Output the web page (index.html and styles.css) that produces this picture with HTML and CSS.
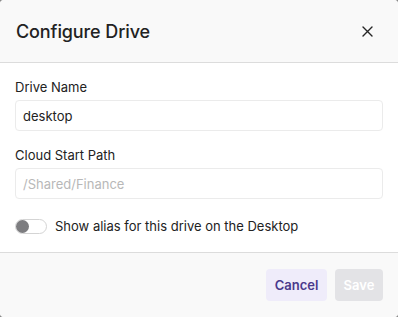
FILE: index.html
```html
<!DOCTYPE html>
<html>
<head>
<meta charset="utf-8">
<link rel="stylesheet" href="styles.css">
</head>
<body>
<div class="dialog">
  <div class="header">
    <h1 class="title">Configure Drive</h1>
    <button class="close" aria-label="Close">
      <svg width="11" height="11" viewBox="0 0 11 11"><path d="M1 1L10 10M10 1L1 10" stroke="#262626" stroke-width="1.4" stroke-linecap="round"/></svg>
    </button>
  </div>
  <div class="body">
    <label class="field">
      <span class="label">Drive Name</span>
      <input class="input" type="text" value="desktop">
    </label>
    <label class="field">
      <span class="label">Cloud Start Path</span>
      <input class="input" type="text" placeholder="/Shared/Finance">
    </label>
    <div class="toggle-row">
      <span class="switch"><span class="knob"></span></span>
      <span class="toggle-text">Show alias for this drive on the Desktop</span>
    </div>
  </div>
  <div class="footer">
    <button class="btn cancel">Cancel</button>
    <button class="btn save" disabled>Save</button>
  </div>
</div>
</body>
</html>
```

FILE: styles.css
```css
* { box-sizing: border-box; }
html, body { margin: 0; padding: 0; }
body {
  background: #8a8a8a;
  font-family: Inter, "Noto Sans", sans-serif;
  color: #222;
  width: 398px;
  height: 317px;
  overflow: hidden;
}
.dialog {
  width: 398px;
  height: 317px;
  background: #fff;
  border-radius: 4px;
  display: flex;
  flex-direction: column;
  overflow: hidden;
}
.header {
  height: 63px;
  background: #f9f9f9;
  border-bottom: 1px solid #dcdcdc;
  display: flex;
  align-items: center;
  justify-content: space-between;
  padding: 0 25px 0 16px;
  flex: none;
}
.title {
  margin: 0;
  font-size: 18px;
  font-weight: 500;
  color: #222;
  letter-spacing: -0.1px;
}
.close {
  border: none;
  background: none;
  padding: 0;
  width: 11px;
  height: 11px;
  display: flex;
}
.body {
  padding: 16px 15px 0 15px;
  flex: 1;
  display: flex;
  flex-direction: column;
}
.field {
  display: flex;
  flex-direction: column;
  margin-bottom: 16px;
}
.label {
  font-size: 13px;
  color: #222;
  margin-bottom: 5px;
  line-height: 16px;
}
.input {
  height: 31px;
  border: 1px solid #ebebeb;
  border-radius: 4px;
  padding: 0 7px;
  font-family: inherit;
  font-size: 13px;
  color: #222;
  outline: none;
}
.input::placeholder { color: #b8b8b8; }
.toggle-row {
  display: flex;
  align-items: center;
  gap: 8px;
  margin-top: 3px;
  height: 16px;
}
.switch {
  width: 32px;
  height: 15px;
  border: 1px solid #d4d4d4;
  border-radius: 8px;
  background: #fff;
  position: relative;
  display: inline-block;
}
.knob {
  position: absolute;
  left: 0;
  top: 0;
  width: 13px;
  height: 13px;
  border-radius: 50%;
  background: #7d7d80;
}
.toggle-text {
  font-size: 13px;
  color: #222;
}
.footer {
  height: 65px;
  background: #f9f9f9;
  border-top: 1px solid #dcdcdc;
  display: flex;
  justify-content: flex-end;
  align-items: center;
  gap: 8px;
  padding: 0 15px 0 0;
  flex: none;
}
.btn {
  height: 32px;
  border: none;
  border-radius: 4px;
  font-family: inherit;
  font-size: 13px;
  font-weight: 600;
  padding: 0 8px;
}
.cancel {
  width: 61px;
  background: #efecfa;
  color: #4a3a8c;
}
.save {
  width: 48px;
  background: #e3e3e6;
  color: #fff;
}
```
